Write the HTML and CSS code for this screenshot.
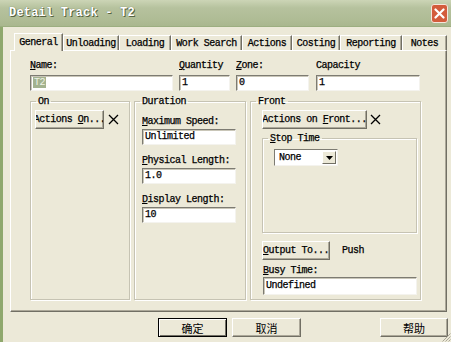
FILE: index.html
```html
<!DOCTYPE html>
<html>
<head>
<meta charset="utf-8">
<link rel="stylesheet" href="styles.css">
</head>
<body>
<div class="win">
  <div class="titlebar">
    <span class="title">Detail Track - T2</span>
    <span class="close"><svg width="11" height="11" viewBox="0 0 11 11"><path d="M1.5 1.5 L9.5 9.5 M9.5 1.5 L1.5 9.5" stroke="#fff" stroke-width="2.2" stroke-linecap="round"/></svg></span>
  </div>
  <div class="client">
    <div class="tabs">
      <div class="tab sel t1">General</div>
      <div class="tab t2">Unloading</div>
      <div class="tab t3">Loading</div>
      <div class="tab t4">Work Search</div>
      <div class="tab t5">Actions</div>
      <div class="tab t6">Costing</div>
      <div class="tab t7">Reporting</div>
      <div class="tab t8">Notes</div>
    </div>
    <div class="panel">
      <div class="toprow">
        <div class="field f-name"><div class="lbl"><u>N</u>ame:</div><div class="input"><span class="selected">T2</span></div></div>
        <div class="field f-qty"><div class="lbl"><u>Q</u>uantity</div><div class="input">1</div></div>
        <div class="field f-zone"><div class="lbl"><u>Z</u>one:</div><div class="input">0</div></div>
        <div class="field f-cap"><div class="lbl">Capacity</div><div class="input">1</div></div>
      </div>
      <div class="groups">
        <fieldset class="grp g-on">
          <legend>On</legend>
          <div class="btnline online">
            <div class="btn b-on"><span>Actions <u>O</u>n...</span></div>
            <svg class="xmark" width="11" height="11" viewBox="0 0 11 11"><path d="M1 1 L10 10 M10 1 L1 10" stroke="#000" stroke-width="1.3"/></svg>
          </div>
        </fieldset>
        <fieldset class="grp g-dur">
          <legend>Duration</legend>
          <div class="durbody">
            <div class="dfield"><div class="lbl"><u>M</u>aximum Speed:</div><div class="input">Unlimited</div></div>
            <div class="dfield"><div class="lbl"><u>P</u>hysical Length:</div><div class="input">1.0</div></div>
            <div class="dfield"><div class="lbl"><u>D</u>isplay Length:</div><div class="input">10</div></div>
          </div>
        </fieldset>
        <fieldset class="grp g-front">
          <legend>Front</legend>
          <div class="frontbody">
            <div class="btnline">
              <div class="btn b-front"><span>Actions on <u>F</u>ront...</span></div>
              <svg class="xmark" width="11" height="11" viewBox="0 0 11 11"><path d="M1 1 L10 10 M10 1 L1 10" stroke="#000" stroke-width="1.3"/></svg>
            </div>
            <fieldset class="grp g-stop">
              <legend><u>S</u>top Time</legend>
              <div class="stopbody">
                <div class="select"><span class="selval">None</span><span class="arrow"><svg width="7" height="4" viewBox="0 0 7 4"><path d="M0 0 H7 L3.5 4 Z" fill="#000"/></svg></span></div>
              </div>
            </fieldset>
            <div class="outline">
              <div class="btn b-out"><span><u>O</u>utput To...</span></div>
              <span class="push">Push</span>
            </div>
            <div class="lbl busy"><u>B</u>usy Time:</div>
            <div class="input i-busy">Undefined</div>
          </div>
        </fieldset>
      </div>
    </div>
    <div class="btnrow">
      <div class="btn cbtn def">确定</div>
      <div class="btn cbtn">取消</div>
      <div class="btn cbtn help">帮助</div>
    </div>
  </div>
  <svg class="grip" width="10" height="10" viewBox="0 0 10 10"><path d="M9.5 1.5 L1.5 9.5 M9.5 4.5 L4.5 9.5 M9.5 7.5 L7.5 9.5" stroke="#aca899" stroke-width="1"/></svg>
</div>
</body>
</html>
```
FILE: styles.css
```css
* { box-sizing: border-box; }
html, body { margin: 0; padding: 0; }
body {
  width: 451px; height: 342px; overflow: hidden;
  background: #ece9d8;
  font-family: "Liberation Mono", monospace;
  font-size: 10px; letter-spacing: -0.5px; color: #000;
  -webkit-text-stroke: 0.25px #000;
}
u { text-decoration: underline; text-underline-offset: 1px; }
.win { width: 451px; height: 342px; display: flex; flex-direction: column; position: relative; }
.titlebar {
  height: 27px; flex: none;
  display: flex; align-items: center; justify-content: space-between;
  padding: 0 3px 0 9px;
  background: linear-gradient(#ccd5b6, #b6c29e 30%, #afbc95 75%, #a9b78e);
  border-bottom: 1px solid #9cae80;
}
.title {
  font-size: 12px; font-weight: bold; color: #fff; letter-spacing: 0.2px;
  -webkit-text-stroke: 0;
  text-shadow: 1px 1px 0 #56633f, 0 0 1px #56633f;
}
.close {
  width: 17px; height: 19px; background: #d35c3c;
  border: 1px solid #f4e6dc; border-radius: 3px;
  display: flex; align-items: center; justify-content: center;
}
.client {
  flex: 1; display: flex; flex-direction: column;
  border-left: 3px solid #8fa86d;
}
.tabs { display: flex; align-items: flex-end; height: 17px; margin: 6px 0 0 11px; }
.tab {
  height: 15px; display: flex; align-items: center; justify-content: center;
  border-top: 1px solid #fff; border-left: 1px solid #fff; border-right: 1px solid #716f64;
  box-shadow: inset -1px 0 #aca899;
  white-space: nowrap; flex: none;
}
.tab.sel { height: 18px; margin-bottom: -1px; background: #ece9d8; position: relative; z-index: 1; }
.t1 { width: 49px; } .t2 { width: 56px; } .t3 { width: 52px; } .t4 { width: 71px; }
.t5 { width: 50px; } .t6 { width: 48px; } .t7 { width: 62px; } .t8 { width: 45px; }
.panel {
  margin-left: 7px; width: 437px; height: 262px;
  border: 1px solid; border-color: #fff #716f64 #716f64 #fff;
  box-shadow: inset -1px -1px #aca899;
  padding: 8px 0 0 19px;
}
.toprow { display: flex; column-gap: 6px; }
.f-name { width: 143px; } .f-qty { width: 51px; } .f-zone { width: 73px; } .f-cap { width: 104px; margin-left: 1px; }
.lbl { height: 13px; line-height: 13px; overflow: hidden; white-space: nowrap; margin-bottom: 3px; }
.input {
  height: 16px; background: #fff; line-height: 14px; padding-left: 2px; white-space: nowrap;
  border: 1px solid; border-color: #7d7b72 #f4f3ee #f4f3ee #7d7b72;
  box-shadow: inset 1px 1px #c9c6b8;
}
.selected { background: #a3b28f; color: #eef2e6; -webkit-text-stroke: 0; padding: 0 1px; }
.groups { display: flex; column-gap: 4px; margin-top: 5px; height: 204px; }
.grp {
  margin: 0; padding: 0; min-width: 0; flex: none;
  border: 1px solid #c6c3b3; box-shadow: 1px 1px #fff, inset 1px 1px #fff;
}
.grp legend { margin-left: 5px; padding: 0 2px; line-height: 11px; }
.g-on { width: 100px; }
.g-dur { width: 112px; }
.g-front { width: 171px; }
.online { padding: 3px 0 0 4px; }
.btnline { display: flex; align-items: center; column-gap: 4px; }
.btn {
  height: 19px; display: flex; align-items: center; justify-content: center;
  overflow: hidden; white-space: nowrap; flex: none;
  border: 1px solid; border-color: #fff #716f64 #716f64 #fff;
  box-shadow: inset -1px -1px #aca899;
  background: #ece9d8;
}
.b-on { width: 69px; }
.b-front { width: 105px; }
.xmark { flex: none; }
.durbody { display: flex; flex-direction: column; row-gap: 9px; padding: 8px 0 0 7px; }
.dfield .lbl { margin-bottom: 1px; }
.dfield .input { width: 94px; }
.frontbody { display: flex; flex-direction: column; padding: 3px 0 0 11px; }
.frontbody .xmark { margin-left: -1px; }
.g-stop { width: 155px; height: 100px; margin-top: 4px; }
.stopbody { padding: 5px 0 0 11px; }
.select {
  width: 64px; height: 17px; background: #fff; display: flex; align-items: center; justify-content: space-between;
  border: 1px solid; border-color: #7d7b72 #f4f3ee #f4f3ee #7d7b72;
  padding: 1px; padding-left: 4px;
}
.arrow {
  width: 14px; height: 13px; display: flex; align-items: center; justify-content: center;
  border: 1px solid; border-color: #fff #716f64 #716f64 #fff; background: #ece9d8;
}
.outline { display: flex; align-items: center; column-gap: 12px; margin-top: 8px; }
.b-out { width: 68px; }
.busy { margin: 5px 0 1px 1px; height: 11px; line-height: 11px; }
.i-busy { width: 154px; height: 18px; margin-left: 1px; line-height: 16px; }
.btnrow { display: flex; margin: 6px 0 0 155px; column-gap: 5px; }
.cbtn {
  width: 69px; height: 19px;
  font-family: "Noto Sans CJK SC", sans-serif; font-size: 11px; letter-spacing: 0;
  -webkit-text-stroke: 0;
}
.def { border-color: #000; box-shadow: inset 1px 1px #fff, inset -1px -1px #716f64; }
.help { margin-left: 74px; width: 68px; }
.grip { position: absolute; right: 0; bottom: 0; }
```
